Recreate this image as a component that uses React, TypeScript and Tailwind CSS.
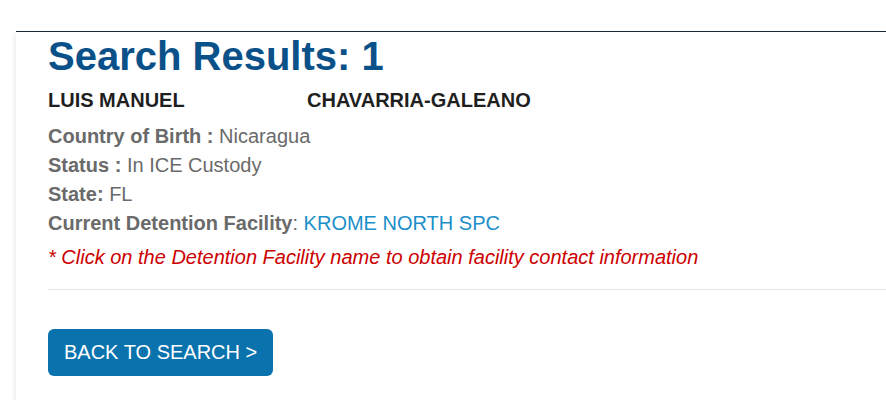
import React from "react";

export default function App() {
  return (
    <div className="min-h-[400px] bg-white pt-[31px] pl-[16px] overflow-hidden" style={{ fontFamily: '"Liberation Sans", Arial, sans-serif' }}>
      <div className="border-t border-[#1c2833] pl-[32px] pt-[1px] pb-[40px] shadow-[-2px_2px_4px_rgba(0,0,0,0.07)]">
        <h1 className="text-[40px] leading-[46px] font-bold text-[#0b5189]">Search Results: 1</h1>
        <div className="mt-[7px] flex text-[20px] leading-[29px] font-bold text-[#1f1f1f]">
          <span className="w-[259px]">LUIS MANUEL</span>
          <span>CHAVARRIA-GALEANO</span>
        </div>
        <div className="mt-[7px] text-[20px] leading-[29px] text-[#6a6a6a]">
          <div><span className="font-bold">Country of Birth :</span> Nicaragua</div>
          <div><span className="font-bold">Status :</span> In ICE Custody</div>
          <div><span className="font-bold">State:</span> FL</div>
          <div>
            <span className="font-bold">Current Detention Facility</span>: <a className="text-[#1b8fc9]" href="#">KROME NORTH SPC</a>
          </div>
        </div>
        <p className="mt-[5px] text-[20px] leading-[29px] italic text-[#cc0000]">
          * Click on the Detention Facility name to obtain facility contact information
        </p>
        <div className="mt-[17px] border-t border-[#e6e6e6]" />
        <button className="mt-[39px] h-[47px] px-[16px] rounded-[6px] bg-[#0a72ad] text-white text-[20px] leading-[47px]">
          BACK TO SEARCH &gt;
        </button>
      </div>
    </div>
  );
}
